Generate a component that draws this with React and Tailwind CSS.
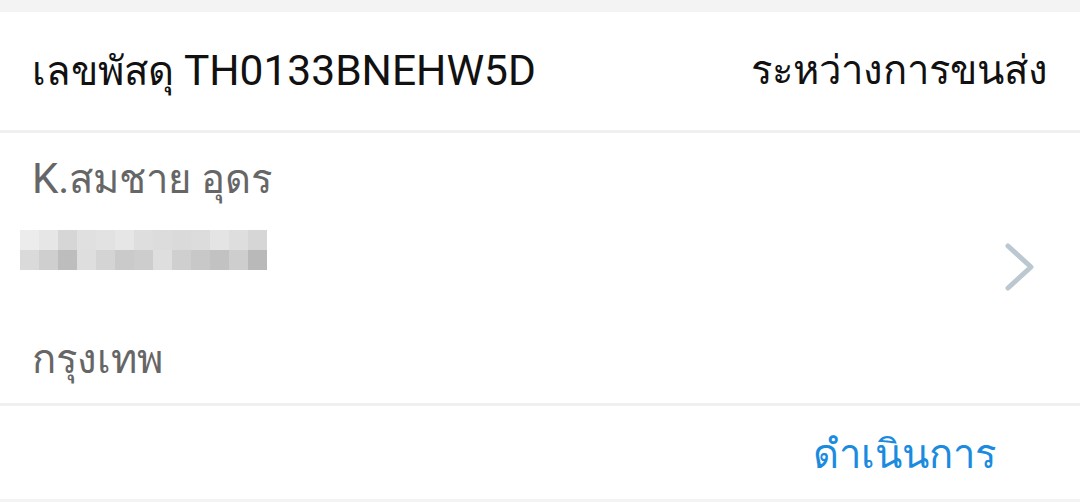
import React from "react";

const cellsTop = ["#e4e4e4","#dcdcdc","#d6d6d6","#e0e0e0","#e2e2e2","#e6e6e6","#dedede","#dcdcdc","#dadada","#dcdcdc","#e4e4e4","#dedede","#d6d6d6"];
const cellsBot = ["#dadada","#cfcfcf","#bdbdbd","#dedede","#d4d4d4","#cacaca","#cdcdcd","#dedede","#cfcfcf","#c8c8c8","#c2c2c2","#cecece","#b9b9b9"];

export default function App() {
  const font = { fontFamily: 'Roboto, "Noto Sans", "Liberation Sans", sans-serif' };
  return (
    <div className="w-[1080px] h-[502px] bg-[#f3f3f3] pt-[12px] overflow-hidden" style={font}>
      <div className="bg-white h-[118px] flex items-center justify-between pl-[32px] pr-[32px]">
        <span className="text-[40px] text-[#111] leading-none">
          เลขพัสดุ <span className="text-[42.5px]">TH0133BNEHW5D</span>
        </span>
        <span className="text-[40px] text-[#111] leading-none">ระหว่างการขนส่ง</span>
      </div>
      <div className="h-[3px] bg-[#f0f0f0]" />
      <div className="bg-white h-[270px] flex items-center pl-[32px] pr-[44px]">
        <div className="flex-1 flex flex-col">
          <div className="text-[40px] text-[#666] leading-none mt-[2px]">
            <span className="text-[42px]">K.</span>สมชาย อุดร
          </div>
          <div className="relative mt-[30px] -ml-[12px] h-[40px] w-[290px]">
            <div className="flex">
              {cellsTop.map((c, i) => (
                <div key={i} className="w-[19px] h-[20px]" style={{ background: c, opacity: i < 2 ? 0.7 : 1 }} />
              ))}
            </div>
            <div className="flex">
              {cellsBot.map((c, i) => (
                <div key={i} className="w-[19px] h-[20px]" style={{ background: c }} />
              ))}
            </div>
          </div>
          <div className="text-[40px] text-[#666] leading-none mt-[70px]">กรุงเทพ</div>
        </div>
        <svg width="32" height="50" viewBox="0 0 32 50" className="-mt-[2px]">
          <path d="M4 4 L27 25 L4 46" fill="none" stroke="#bcc8d0" strokeWidth="5" strokeLinecap="round" strokeLinejoin="round" />
        </svg>
      </div>
      <div className="h-[3px] bg-[#f0f0f0]" />
      <div className="bg-white h-[93px] flex items-center justify-end pr-[84px]">
        <span className="text-[40px] text-[#1b8be0] leading-none mt-[4px]">ดำเนินการ</span>
      </div>
    </div>
  );
}
